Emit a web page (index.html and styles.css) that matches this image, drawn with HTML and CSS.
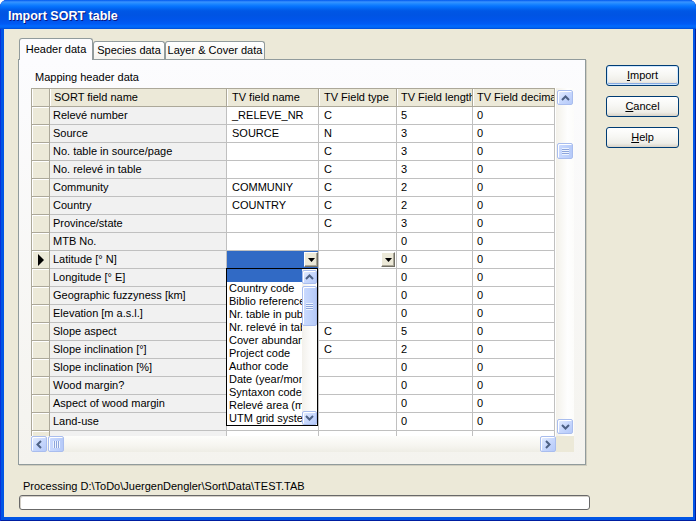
FILE: index.html
```html
<!DOCTYPE html>
<html>
<head>
<meta charset="utf-8">
<title>Import SORT table</title>
<link rel="stylesheet" href="styles.css">
</head>
<body>
<div class="window">
  <div class="titlebar"><span class="title">Import SORT table</span></div>
  <div class="client">
    <div class="top">
      <div class="tabctl">
        <div class="tabs">
          <div class="tab sel">Header data</div>
          <div class="tab t2">Species data</div>
          <div class="tab t3">Layer &amp; Cover data</div>
        </div>
        <div class="panel">
          <div class="caption">Mapping header data</div>
          <div class="grid">
            <div class="data">
              <div class="row head">
                <div class="c ind"></div><div class="c f1">SORT field name</div><div class="c f2">TV field name</div><div class="c f3">TV Field type</div><div class="c f4">TV Field length</div><div class="c f5">TV Field decimals</div>
              </div>
              <div class="row"><div class="c ind"></div><div class="c f1">Relevé number</div><div class="c f2">_RELEVE_NR</div><div class="c f3">C</div><div class="c f4">5</div><div class="c f5">0</div></div>
              <div class="row"><div class="c ind"></div><div class="c f1">Source</div><div class="c f2">SOURCE</div><div class="c f3">N</div><div class="c f4">3</div><div class="c f5">0</div></div>
              <div class="row"><div class="c ind"></div><div class="c f1">No. table in source/page</div><div class="c f2"></div><div class="c f3">C</div><div class="c f4">3</div><div class="c f5">0</div></div>
              <div class="row"><div class="c ind"></div><div class="c f1">No. relevé in table</div><div class="c f2"></div><div class="c f3">C</div><div class="c f4">3</div><div class="c f5">0</div></div>
              <div class="row"><div class="c ind"></div><div class="c f1">Community</div><div class="c f2">COMMUNIY</div><div class="c f3">C</div><div class="c f4">2</div><div class="c f5">0</div></div>
              <div class="row"><div class="c ind"></div><div class="c f1">Country</div><div class="c f2">COUNTRY</div><div class="c f3">C</div><div class="c f4">2</div><div class="c f5">0</div></div>
              <div class="row"><div class="c ind"></div><div class="c f1">Province/state</div><div class="c f2"></div><div class="c f3">C</div><div class="c f4">3</div><div class="c f5">0</div></div>
              <div class="row"><div class="c ind"></div><div class="c f1">MTB No.</div><div class="c f2"></div><div class="c f3"></div><div class="c f4">0</div><div class="c f5">0</div></div>
              <div class="row"><div class="c ind cur"><span class="arrow"></span></div><div class="c f1">Latitude [° N]</div>
                <div class="c f2 selcell">
                  <span class="ddbtn"><svg width="7" height="4" viewBox="0 0 7 4"><polygon points="0,0 7,0 3.5,4" fill="#000"/></svg></span>
                  <div class="droplist">
                    <div class="items">
                      <div class="item hl">&nbsp;</div>
                      <div class="item">Country code</div>
                      <div class="item">Biblio reference</div>
                      <div class="item">Nr. table in publication</div>
                      <div class="item">Nr. relevé in table</div>
                      <div class="item">Cover abundance scale</div>
                      <div class="item">Project code</div>
                      <div class="item">Author code</div>
                      <div class="item">Date (year/month/day)</div>
                      <div class="item">Syntaxon code</div>
                      <div class="item">Relevé area (m²)</div>
                      <div class="item">UTM grid system</div>
                    </div>
                    <div class="lscroll">
                      <span class="sbtn lbtn"><svg width="9" height="6" viewBox="0 0 9 6"><polyline points="1,5 4.5,1.5 8,5" fill="none" stroke="#4d6185" stroke-width="2"/></svg></span>
                      <span class="sthumb lthumb"><span class="grip-h"></span></span>
                      <span class="lspace"></span>
                      <span class="sbtn lbtn"><svg width="9" height="6" viewBox="0 0 9 6"><polyline points="1,1 4.5,4.5 8,1" fill="none" stroke="#4d6185" stroke-width="2"/></svg></span>
                    </div>
                  </div>
                </div>
                <div class="c f3 btncell"><span class="ddbtn"><svg width="7" height="4" viewBox="0 0 7 4"><polygon points="0,0 7,0 3.5,4" fill="#000"/></svg></span></div><div class="c f4">0</div><div class="c f5">0</div></div>
              <div class="row"><div class="c ind"></div><div class="c f1">Longitude [° E]</div><div class="c f2"></div><div class="c f3"></div><div class="c f4">0</div><div class="c f5">0</div></div>
              <div class="row"><div class="c ind"></div><div class="c f1">Geographic fuzzyness [km]</div><div class="c f2"></div><div class="c f3"></div><div class="c f4">0</div><div class="c f5">0</div></div>
              <div class="row"><div class="c ind"></div><div class="c f1">Elevation [m a.s.l.]</div><div class="c f2"></div><div class="c f3"></div><div class="c f4">0</div><div class="c f5">0</div></div>
              <div class="row"><div class="c ind"></div><div class="c f1">Slope aspect</div><div class="c f2"></div><div class="c f3">C</div><div class="c f4">5</div><div class="c f5">0</div></div>
              <div class="row"><div class="c ind"></div><div class="c f1">Slope inclination [°]</div><div class="c f2"></div><div class="c f3">C</div><div class="c f4">2</div><div class="c f5">0</div></div>
              <div class="row"><div class="c ind"></div><div class="c f1">Slope inclination [%]</div><div class="c f2"></div><div class="c f3"></div><div class="c f4">0</div><div class="c f5">0</div></div>
              <div class="row"><div class="c ind"></div><div class="c f1">Wood margin?</div><div class="c f2"></div><div class="c f3"></div><div class="c f4">0</div><div class="c f5">0</div></div>
              <div class="row"><div class="c ind"></div><div class="c f1">Aspect of wood margin</div><div class="c f2"></div><div class="c f3"></div><div class="c f4">0</div><div class="c f5">0</div></div>
              <div class="row"><div class="c ind"></div><div class="c f1">Land-use</div><div class="c f2"></div><div class="c f3"></div><div class="c f4">0</div><div class="c f5">0</div></div>
              <div class="row"><div class="c ind"></div><div class="c f1"></div><div class="c f2"></div><div class="c f3"></div><div class="c f4"></div><div class="c f5"></div></div>
            </div>
            <div class="vscroll">
              <span class="sbtn vbtn"><svg width="9" height="6" viewBox="0 0 9 6"><polyline points="1,5 4.5,1.5 8,5" fill="none" stroke="#4d6185" stroke-width="2"/></svg></span>
              <span class="sthumb vthumb"><span class="grip-h"></span></span>
              <span class="vspace"></span>
              <span class="sbtn vbtn"><svg width="9" height="6" viewBox="0 0 9 6"><polyline points="1,1 4.5,4.5 8,1" fill="none" stroke="#4d6185" stroke-width="2"/></svg></span>
            </div>
            <div class="hscroll">
              <span class="sbtn hbtn"><svg width="6" height="9" viewBox="0 0 6 9"><polyline points="5,1 1.5,4.5 5,8" fill="none" stroke="#4d6185" stroke-width="2"/></svg></span>
              <span class="sthumb hthumb"><span class="grip-v"></span></span>
              <span class="hspace"></span>
              <span class="sbtn hbtn"><svg width="6" height="9" viewBox="0 0 6 9"><polyline points="1,1 4.5,4.5 1,8" fill="none" stroke="#4d6185" stroke-width="2"/></svg></span>
            </div>
            <div class="corner"></div>
          </div>
        </div>
      </div>
      <div class="buttons">
        <div class="btn def"><u>I</u>mport</div>
        <div class="btn"><u>C</u>ancel</div>
        <div class="btn"><u>H</u>elp</div>
      </div>
    </div>
    <div class="status">Processing D:\ToDo\JuergenDengler\Sort\Data\TEST.TAB</div>
    <div class="progress"></div>
  </div>
</div>
</body>
</html>
```
FILE: styles.css
```css
html, body { margin: 0; padding: 0; }
body {
  width: 696px; height: 521px; overflow: hidden;
  font-family: "Liberation Sans", Arial, sans-serif;
  font-size: 11px; color: #000;
  background: #fff;
}
.window {
  width: 696px; height: 521px; box-sizing: border-box;
  background: #0055e5;
  border-radius: 7px 7px 0 0;
  display: flex; flex-direction: column;
  box-shadow: inset 1px 0 #0831d9, inset -1px 0 #001ea0, inset 0 -1px #001ea0;
}
.titlebar {
  height: 29px; flex: none;
  border-radius: 7px 7px 0 0;
  background: linear-gradient(to bottom, #0058ee 0, #3a93ff 2px, #288eff 3px, #127dff 5px, #036ffc 7px, #0262ee 9px, #0057e5 11px, #0054e3 15px, #0055eb 20px, #005bf5 24px, #026afe 26px, #0062ef 28px, #0043cf 29px);
  display: flex; align-items: center;
}
.title {
  margin-left: 8px; margin-top: 3px;
  color: #fff; font-weight: bold; font-size: 12.5px;
  text-shadow: 1px 1px 0 #0a1883;
}
.client {
  flex: 1;
  margin: 0 3px 4px 4px;
  background: #ece9d8;
  display: flex; flex-direction: column;
}
.top { display: flex; }
.tabctl { margin: 9px 0 0 14px; width: 568px; }
.tabs { display: flex; align-items: flex-end; height: 21px; padding-left: 1px; position: relative; z-index: 1; }
.tab {
  box-sizing: border-box; height: 18px; line-height: 16px;
  border: 1px solid #919b9c; border-bottom: none;
  border-radius: 3px 3px 0 0;
  background: linear-gradient(to bottom, #fff, #f4f3ee);
  text-align: center;
}
.tab.sel {
  width: 74px; height: 22px; line-height: 20px;
  margin-bottom: -1px;
  background: #fcfcfe;
  box-shadow: inset 0 2px 0 #fcfcfe;
  padding-bottom: 2px;
}
.tab.t2 { width: 72px; }
.tab.t3 { width: 100px; margin-left: 0; }
.panel {
  box-sizing: border-box; height: 406px;
  border: 1px solid #919b9c;
  box-shadow: 1px 1px 0 #d0cdbe;
  background: linear-gradient(to bottom, #fcfcfe, #f4f3ee);
  padding: 11px 0 0 12px;
}
.caption { line-height: 13px; margin-left: 4px; }
.grid {
  margin-top: 4px;
  width: 543px; height: 364px;
  display: grid;
  grid-template-columns: 525px 18px;
  grid-template-rows: 348px 16px;
}
.data { overflow: hidden; background: #fff; }
.row { display: flex; height: 18px; }
.c {
  box-sizing: border-box; flex: none;
  border-right: 1px solid #c0c0c0; border-bottom: 1px solid #c0c0c0;
  padding-left: 4px; line-height: 17px;
  white-space: nowrap; overflow: hidden;
  background: #fff;
}
.ind {
  width: 19px; padding: 0;
  background: #ece9d8;
  border-left: 1px solid #aca899;
  border-right-color: #aca899; border-bottom-color: #aca899;
  box-shadow: inset 1px 1px 0 #fff;
  display: flex; align-items: center; justify-content: center;
}
.f1 { width: 177px; padding-left: 3px; background: #f1f1f1; }
.f2 { width: 92px; padding-left: 5px; }
.f3 { width: 78px; padding-left: 5px; }
.f4 { width: 76px; }
.f5 { width: 82px; }
.row.head { height: 19px; }
.head .c {
  background: #ece9d8;
  border-top: 1px solid #aca899;
  border-right-color: #aca899; border-bottom-color: #aca899;
  box-shadow: inset 1px 0 0 #fff;
  padding-left: 4px;
}
.head .f2, .head .f3 { padding-left: 5px; }
.arrow {
  width: 0; height: 0; margin-left: 1px;
  border-left: 6px solid #000;
  border-top: 6px solid transparent;
  border-bottom: 6px solid transparent;
}
.selcell {
  position: relative; overflow: visible;
  background: #316ac5;
  display: flex; justify-content: flex-end; align-items: flex-start;
  padding: 1px 0 0 0;
}
.btncell { display: flex; justify-content: flex-end; align-items: flex-start; padding: 1px 1px 0 0; }
.ddbtn {
  box-sizing: border-box; width: 14px; height: 15px;
  background: #ece9d8;
  border: 1px solid; border-color: #fff #716f64 #716f64 #fff;
  box-shadow: inset -1px -1px 0 #aca899;
  display: flex; align-items: center; justify-content: center;
}
.droplist {
  position: absolute; left: -1px; top: 17px;
  box-sizing: border-box; width: 92px; height: 158px;
  border: 1px solid #000;
  background: #fff;
  display: flex; z-index: 2;
}
.items { flex: 1; overflow: hidden; }
.item { height: 13px; line-height: 13px; padding-left: 2px; white-space: nowrap; }
.item.hl { background: #316ac5; }
.lscroll {
  width: 15px; flex: none; display: flex; flex-direction: column;
  background: linear-gradient(to right, #f3f1ec, #fefefe 70%, #fdfdfb);
  padding-top: 1px;
}
.sbtn {
  box-sizing: border-box; flex: none;
  border: 1px solid #a9bdee; border-radius: 2px;
  background: linear-gradient(135deg, #e6eeff 0%, #c8d8fd 50%, #b5c9f9 100%);
  box-shadow: inset 1px 1px 0 #fff;
  display: flex; align-items: center; justify-content: center;
}
.lbtn { width: 15px; height: 14px; }
.lthumb { width: 15px; height: 40px; margin-top: 2px; }
.lspace { flex: 1; }
.sthumb {
  box-sizing: border-box; flex: none;
  border: 1px solid #a9bdee; border-radius: 2px;
  background: linear-gradient(to right, #cbdafe, #c1d3fc 50%, #b6caf8);
  box-shadow: inset 1px 1px 0 #fff;
  display: flex; align-items: center; justify-content: center;
}
.grip-h {
  width: 7px; height: 7px;
  background: repeating-linear-gradient(to bottom, #eef4fe 0, #eef4fe 1px, #8da5dc 1px, #8da5dc 2px);
}
.grip-v {
  width: 7px; height: 7px;
  background: repeating-linear-gradient(to right, #eef4fe 0, #eef4fe 1px, #8da5dc 1px, #8da5dc 2px);
}
.vscroll {
  display: flex; flex-direction: column; align-items: flex-end;
  background: linear-gradient(to right, #f3f1ea, #fefefe 65%, #fcfcfa);
  padding: 2px 1px 2px 0;
}
.vbtn { width: 16px; height: 15px; }
.vthumb { width: 16px; height: 16px; margin-top: 38px; }
.vspace { flex: 1; }
.hscroll {
  display: flex; align-items: flex-start;
  background: linear-gradient(to bottom, #fdfdfb, #f6f5f0 60%, #eeede5);
}
.hbtn { width: 16px; height: 16px; }
.hthumb { width: 16px; height: 16px; margin-left: 1px; }
.hspace { flex: 1; }
.corner { background: #ece9d8; }
.buttons { margin: 36px 0 0 20px; display: flex; flex-direction: column; gap: 10px; }
.btn {
  box-sizing: border-box; width: 73px; height: 21px;
  border: 1px solid #003c74; border-radius: 3px;
  background: linear-gradient(to bottom, #fff 0%, #f7f7f4 45%, #efeee8 80%, #d8d2c6 100%);
  text-align: center; line-height: 19px;
}
.btn.def {
  box-shadow: inset 0 0 0 1px #cee7ff, inset 0 -1px 0 1px #89ade4;
}
.btn u { text-decoration: underline; }
.status { margin: 15px 0 0 19px; line-height: 13px; }
.progress {
  box-sizing: border-box; width: 571px; height: 15px;
  margin: 2px 0 0 15px;
  border: 1px solid #686868; border-radius: 3px;
  background: #fff;
  box-shadow: inset 1px 1px 0 #d4d0c8;
}
```
